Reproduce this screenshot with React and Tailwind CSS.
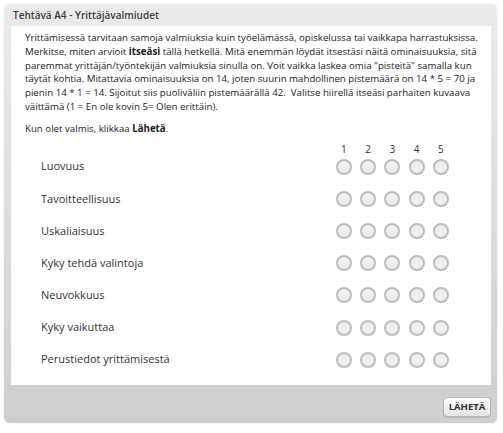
import React from "react";

const skills = [
  "Luovuus",
  "Tavoitteellisuus",
  "Uskaliaisuus",
  "Kyky tehdä valintoja",
  "Neuvokkuus",
  "Kyky vaikuttaa",
  "Perustiedot yrittämisestä",
];

const scale = [1, 2, 3, 4, 5];

const App = () => {
  return (
    <div className="w-[503px] h-[433px] bg-white p-[4px] font-['Open_Sans',sans-serif]">
      <div className="w-[493px] h-[419px] rounded-[6px] bg-gradient-to-b from-[#ebebeb] to-[#cfcfcf] shadow-[0_0_1px_rgba(0,0,0,0.35)] flex flex-col">
        <div className="h-[22px] flex items-center pl-[9px] text-[10px] font-semibold text-[#3d3d3d]">
          Tehtävä A4 - Yrittäjävalmiudet
        </div>
        <div className="ml-[7px] mr-[6px] h-[359px] bg-white pl-[14px] pt-[5px]">
          <p className="text-[9.7px] leading-[13.8px] text-[#222] whitespace-nowrap">
            Yrittämisessä tarvitaan samoja valmiuksia kuin työelämässä, opiskelussa tai vaikkapa harrastuksissa.
            <br />
            Merkitse, miten arvioit <b>itseäsi</b> tällä hetkellä. Mitä enemmän löydät itsestäsi näitä ominaisuuksia, sitä
            <br />
            paremmat yrittäjän/työntekijän valmiuksia sinulla on. Voit vaikka laskea omia "pisteitä" samalla kun
            <br />
            täytät kohtia. Mitattavia ominaisuuksia on 14, joten suurin mahdollinen pistemäärä on 14 * 5 = 70 ja
            <br />
            pienin 14 * 1 = 14. Sijoitut siis puoliväliin pistemäärällä 42.&nbsp; Valitse hiirellä itseäsi parhaiten kuvaava
            <br />
            väittämä (1 = En ole kovin 5= Olen erittäin).
          </p>
          <p className="mt-[8px] text-[9.7px] leading-[13.8px] text-[#222]">
            Kun olet valmis, klikkaa <b>Lähetä</b>.
          </p>
          <div className="mt-[7px] pr-[38px]">
            <div className="flex h-[14px] items-center">
              <div className="flex-1" />
              {scale.map((n) => (
                <div key={n} className="w-[24.25px] text-center text-[10px] text-[#333]">
                  {n}
                </div>
              ))}
            </div>
            {skills.map((skill) => (
              <div key={skill} className="flex h-[32.2px] items-start pt-[2px]">
                <div className="flex-1 h-[16px] flex items-center pl-[16px] text-[11px] text-[#333]">
                  {skill}
                </div>
                {scale.map((n) => (
                  <div key={n} className="w-[24.25px] flex justify-center">
                    <div className="w-[16px] h-[16px] rounded-full border-2 border-[#bcbcbc] bg-[#efefef]" />
                  </div>
                ))}
              </div>
            ))}
          </div>
        </div>
        <div className="flex-1 flex items-start justify-end pt-[12px] pr-[6px]">
          <button className="w-[48px] h-[20px] rounded-[4px] border border-[#b4b4b4] bg-gradient-to-b from-[#fbfbfb] to-[#e4e4e4] text-[9.5px] font-bold text-[#333] shadow-[0_1px_1px_rgba(0,0,0,0.1)]">
            LÄHETÄ
          </button>
        </div>
      </div>
    </div>
  );
};

export default App;
